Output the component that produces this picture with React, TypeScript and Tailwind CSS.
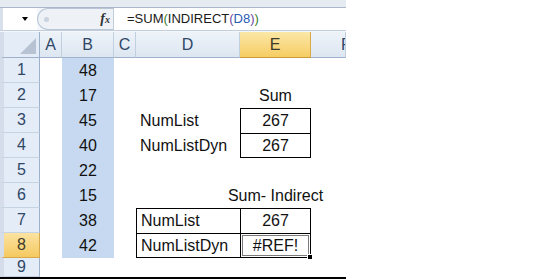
import React from "react";

const COLS = ["A", "B", "C", "D", "E", "F"];
const NUMS = [48, 17, 45, 40, 22, 15, 38, 42];

type Cell = {
  text?: string;
  align?: "left" | "center";
  box?: string;
  active?: boolean;
};

// sheet contents keyed by "col+row"
const SHEET: Record<string, Cell> = {
  E2: { text: "Sum", align: "center" },
  D3: { text: "NumList" },
  E3: { text: "267", align: "center", box: "border-l border-t border-r" },
  D4: { text: "NumListDyn" },
  E4: { text: "267", align: "center", box: "border-l border-t border-r border-b" },
  E6: { text: "Sum- Indirect", align: "center" },
  D7: { text: "NumList", box: "border-l border-t" },
  E7: { text: "267", align: "center", box: "border-l border-t border-r" },
  D8: { text: "NumListDyn", box: "border-l border-t border-b" },
  E8: { text: "#REF!", align: "center", box: "border-l border-t border-r border-b", active: true },
};

const FormulaBar: React.FC = () => (
  <div className="flex flex-col">
    <div className="h-[8px] bg-[#e6ebf2] border-b border-[#a9b7c9]" />
    <div className="h-[23px] flex bg-[#f4f7fb] border-b border-[#c3cedc]">
      <div className="w-[37px] bg-white border-l-[3px] border-[#d7e0eb] flex items-center justify-end pr-[9px]">
        <div className="w-0 h-0 border-l-[3px] border-r-[3px] border-t-[4px] border-l-transparent border-r-transparent border-t-black" />
      </div>
      <div className="w-[76px] flex items-center bg-[#eef2f7] rounded-l-full border-l border-y border-[#b9c6d6] relative">
        <div className="absolute left-[6px] top-[8px] w-[5px] h-[5px] rounded-full bg-[#c9d3df]" />
        <div className="flex-1" />
        <span className="font-['Liberation_Serif'] italic font-bold text-[14px] text-[#333] pr-[3px] leading-none">
          f<span className="text-[10px]">x</span>
        </span>
      </div>
      <div className="flex-1 bg-white border-l border-[#c3cedc] flex items-center pl-[13px] text-[13px] text-[#1a1a1a]">
        =SUM<span className="text-[#3a7d2c]">(</span>INDIRECT
        <span className="text-[#6b4a9e]">(</span>
        <span className="text-[#2a5bb5]">D8</span>
        <span className="text-[#6b4a9e]">)</span>
        <span className="text-[#3a7d2c]">)</span>
      </div>
    </div>
  </div>
);

const ColumnHeader: React.FC<{ label: string }> = ({ label }) => {
  const hot = label === "E";
  return (
    <div
      className={`h-[26px] flex items-center justify-center overflow-hidden whitespace-nowrap text-[16px] border-r ${
        hot
          ? "bg-gradient-to-b from-[#fbe7a6] to-[#f6cd62] border-[#d8a94a] text-[#3d3a2a] border-b border-b-[#c99a3c]"
          : "bg-gradient-to-b from-[#eef3f9] to-[#dde6f1] border-[#c2cfdf] text-[#2f4767] border-b border-b-[#9db1ca]"
      }`}
    >
      {label === "F" ? <span className="pl-[36px]">F</span> : label}
    </div>
  );
};

const RowHeader: React.FC<{ n: number; h: string }> = ({ n, h }) => {
  const hot = n === 8;
  return (
    <div
      className={`${h} flex items-center justify-center text-[16px] border-l-[4px] border-l-[#d4dde9] border-r border-b ${
        hot
          ? "bg-gradient-to-b from-[#fbe3a1] to-[#f5c95e] border-r-[#d8a94a] border-b-[#d8a94a] text-[#3d3a2a]"
          : "bg-[#e4ecf7] border-r-[#9db1ca] border-b-[#c6d3e3] text-[#2f4767]"
      }`}
    >
      {n}
    </div>
  );
};

const SheetCell: React.FC<{ col: string; row: number; h: string }> = ({ col, row, h }) => {
  const key = `${col}${row}`;
  const cell = SHEET[key];
  const selected = col === "B" && row <= 8;
  const num = selected ? String(NUMS[row - 1]) : undefined;
  const text = num ?? cell?.text;
  const center = selected || cell?.align === "center";
  return (
    <div
      className={`${h} relative flex items-center whitespace-nowrap text-[16px] text-[#111] border-black ${
        center ? "justify-center" : "justify-start pl-[4px]"
      } ${selected ? "bg-[#c6d9f0]" : ""} ${cell?.box ?? ""} ${cell?.text ? "z-10" : ""}`}
    >
      {text}
      {cell?.active && (
        <>
          <div className="absolute inset-[1px] border border-[#7a7a7a]" />
          <div className="absolute right-[-3px] bottom-[-3px] w-[6px] h-[6px] bg-black border border-white" />
        </>
      )}
    </div>
  );
};

export default function App() {
  const rows = [1, 2, 3, 4, 5, 6, 7, 8, 9];
  return (
    <div className="w-[549px] h-[280px] bg-white overflow-hidden font-['Liberation_Sans',Arial,sans-serif]">
      <div className="w-[346px] flex flex-col bg-white">
        <FormulaBar />
        <div className="h-[1px] bg-[#f4f7fb]" />
        <div className="grid grid-cols-[40px_22px_52px_22px_104px_71px_35px]">
          <div className="h-[26px] bg-[#e4ecf7] border-l-[4px] border-l-[#d4dde9] border-r border-b border-[#9db1ca] flex items-end justify-end p-[3px]">
            <svg width="16" height="16" viewBox="0 0 16 16">
              <polygon points="16,0 16,16 0,16" fill="#b7c3d2" />
            </svg>
          </div>
          {COLS.map((c) => (
            <ColumnHeader key={c} label={c} />
          ))}
          {rows.map((r) => {
            const h = r === 9 ? "h-[19px]" : "h-[25px]";
            return (
              <React.Fragment key={r}>
                <RowHeader n={r} h={h} />
                {COLS.map((c) => (
                  <SheetCell key={c} col={c} row={r} h={h} />
                ))}
              </React.Fragment>
            );
          })}
        </div>
        <div className="h-[2px] bg-black" />
      </div>
    </div>
  );
}
